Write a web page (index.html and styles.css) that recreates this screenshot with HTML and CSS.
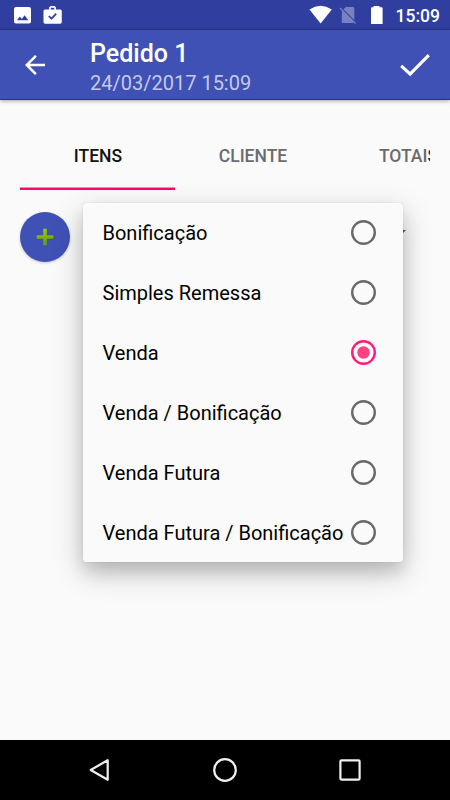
FILE: index.html
```html
<!DOCTYPE html>
<html lang="pt-BR">
<head>
<meta charset="utf-8">
<title>Pedido 1</title>
<link rel="stylesheet" href="styles.css">
</head>
<body>
<div class="screen">
  <div class="status">
    <svg class="status-icons" width="80" height="30" viewBox="0 0 80 30">
      <path fill="#fff" fill-rule="evenodd" d="M16 7H29Q31 7 31 9V21.500Q31 23.500 29 23.500H16Q14 23.500 14 21.500V9Q14 7 16 7ZM17 20.300H28.300L24.600 15.300 21.800 18.900 19.900 16.600Z"/>
      <path fill="#fff" fill-rule="evenodd" d="M50.500 6H54.500L56 7.500V9.500H60.200Q61.800 9.500 61.800 11.100V22Q61.800 23.700 60.100 23.700H45.200Q43.500 23.700 43.500 22V11.100Q43.500 9.500 45.100 9.500H49V7.500ZM50.700 7.700V9.500H54.300V7.700Z"/>
      <path fill="none" stroke="#303f9f" stroke-width="1.700" d="M48.800 16 51.500 18.700 56.200 13.700"/>
    </svg>
    <div class="status-right">
      <svg width="84" height="30" viewBox="306 0 84 30">
        <path fill="#fff" d="M309.500 9.400Q320.500 2.200 331.800 9.400L320.600 23.600Z"/>
        <path fill="#fff" fill-opacity=".35" d="M345.800 7H353Q354.300 7 354.300 8.300V20.100L343.400 9.200ZM341.900 10.700 353.500 22.300Q353.300 23 352.500 23H343Q341.700 23 341.700 21.700Z"/>
        <path stroke="#fff" stroke-opacity=".35" stroke-width="1.300" d="M340 8 355.500 23.500"/>
        <path fill="#fff" d="M373.500 6H379.500V7.300H381.600Q382.600 7.300 382.600 8.300V24H371V8.300Q371 7.300 372 7.300H373.500Z"/>
      </svg>
      <span class="clock">15:09</span>
    </div>
  </div>
  <header class="appbar">
    <svg class="back" width="30" height="30" viewBox="0 0 24 24"><path fill="#fff" d="M20 11H7.830l5.590-5.590L12 4l-8 8 8 8 1.410-1.410L7.830 13H20v-2z"/></svg>
    <div class="heading">
      <h1>Pedido 1</h1>
      <p>24/03/2017 15:09</p>
    </div>
    <svg class="done" width="32" height="26" viewBox="0 0 32 26"><path fill="none" stroke="#fff" stroke-width="3.100" d="M2.200 13.900 11.100 22 29.800 3.200"/></svg>
  </header>
  <main>
    <nav class="tabs">
      <div class="tab active">ITENS</div>
      <div class="tab">CLIENTE</div>
      <div class="tab last">TOTAI<span class="edge">S</span></div>
    </nav>
    <div class="content">
      <div class="fab"><svg width="18" height="18" viewBox="0 0 18 18"><defs><linearGradient id="g" x2="0" y2="1"><stop stop-color="#99cc08"/><stop offset="1" stop-color="#669900"/></linearGradient></defs><path fill="url(#g)" d="M7.200 .7h3.600v6.500H17.300v3.600h-6.500V17.300H7.200v-6.500H.7v-3.600h6.500z"/></svg></div>
      <i class="caret"></i>
      <div class="popup">
        <div class="row"><span>Bonificação</span><svg class="radio" width="26" height="26"><circle cx="13.500" cy="12.500" r="11.300"/></svg></div>
        <div class="row"><span>Simples Remessa</span><svg class="radio" width="26" height="26"><circle cx="13.500" cy="12.500" r="11.300"/></svg></div>
        <div class="row"><span>Venda</span><svg class="radio on" width="26" height="26"><circle cx="13.500" cy="12.500" r="11.300"/><circle class="dot" cx="13.500" cy="12.500" r="6.200"/></svg></div>
        <div class="row"><span>Venda / Bonificação</span><svg class="radio" width="26" height="26"><circle cx="13.500" cy="12.500" r="11.300"/></svg></div>
        <div class="row"><span>Venda Futura</span><svg class="radio" width="26" height="26"><circle cx="13.500" cy="12.500" r="11.300"/></svg></div>
        <div class="row"><span>Venda Futura / Bonificação</span><svg class="radio" width="26" height="26"><circle cx="13.500" cy="12.500" r="11.300"/></svg></div>
      </div>
    </div>
  </main>
  <footer class="navbar">
    <svg width="26" height="26" viewBox="0 0 26 26"><path d="M3.700 13 20.700 3.200V22.800Z"/></svg>
    <svg width="26" height="26" viewBox="0 0 26 26"><circle cx="13" cy="13" r="10.800"/></svg>
    <svg width="26" height="26" viewBox="0 0 26 26"><rect x="3.400" y="3.400" width="19.200" height="19.200" rx="1"/></svg>
  </footer>
</div>
</body>
</html>
```
FILE: styles.css
```css
* { box-sizing: border-box; }
body { margin: 0; font-family: Roboto, sans-serif; color: #000; }
.screen { width: 450px; height: 800px; display: flex; flex-direction: column; background: #fafafa; overflow: hidden; }
.status { height: 30px; flex: none; display: flex; justify-content: space-between; background: linear-gradient(#303f9f 28px, #2a378c); color: #fff; }
.status-right { display: flex; width: 144px; }
.status svg { display: block; flex: none; }
.clock { font-size: 17.5px; font-weight: 500; line-height: 32px; margin-left: 5.5px; }
.appbar { height: 70px; flex: none; display: flex; align-items: center; padding: 0 19px 0 20px; background: #3f51b5; border-bottom: 1px solid #1536a5; box-shadow: 0 1px 4px rgba(0,0,0,.35); color: #fff; }
.back { flex: none; }
.heading { flex: 1; padding: 8px 0 0 40px; }
.heading h1 { margin: 0; font-size: 25px; font-weight: 500; line-height: 30px; }
.heading p { margin: 0; font-size: 20px; line-height: 29px; color: rgba(255,255,255,.7); }
.done { flex: none; }
main { flex: 1; padding: 23px 20px 0; }
.tabs { display: flex; width: 410px; height: 67px; overflow: hidden; }
.tab { width: 155px; flex: none; padding-left: 1px; text-align: center; font-size: 17.5px; font-weight: 500; line-height: 66px; color: #6b6b6b; }
.tab.active { color: #111; background: linear-gradient(transparent 64px, #fa85b3 64px 65px, #f50c68 65px); }
.tab.last { padding-left: 2px; }
.edge { color: #222; }
.content { display: flex; position: relative; padding-top: 22px; }
.fab { width: 50px; height: 50px; border-radius: 50%; background: #3f51b5; display: flex; align-items: center; justify-content: center; box-shadow: 0 1px 3px rgba(0,0,0,.2); }
.caret { position: absolute; left: 374px; top: 40px; border: 6px solid transparent; border-top-color: #555; border-bottom: 0; }
.popup { position: absolute; left: 63px; top: 13px; width: 320px; height: 359px; background: #fafafa; border-radius: 2.5px; box-shadow: 0 10px 30px rgba(0,0,0,.23), 0 10px 15px rgba(0,0,0,.1), 0 0 1px rgba(0,0,0,.3); }
.row { height: 60px; display: flex; align-items: center; justify-content: space-between; padding: 0 27px 0 19.5px; font-size: 20px; white-space: nowrap; }
.radio { flex: none; fill: none; stroke: #696969; stroke-width: 2.4; }
.radio.on { stroke: #ff1a75; }
.radio .dot { fill: #ff4081; stroke: none; }
.navbar { height: 60px; flex: none; background: #000; display: flex; justify-content: space-between; padding: 17px 87px; }
.navbar svg { fill: none; stroke: #efefef; stroke-width: 2.200; stroke-linejoin: round; }
```
